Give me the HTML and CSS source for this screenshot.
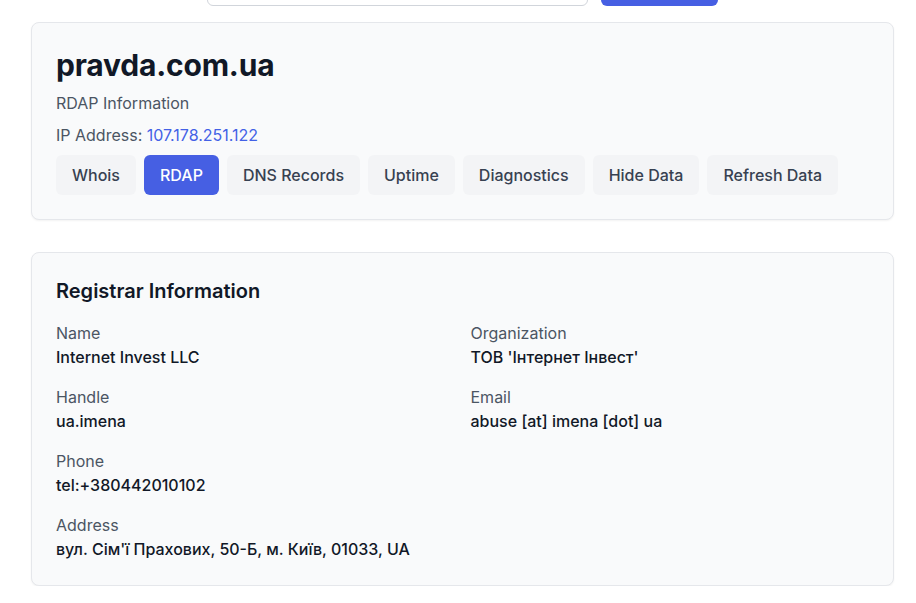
FILE: index.html
```html
<!DOCTYPE html>
<html lang="en">
<head>
<meta charset="utf-8">
<title>pravda.com.ua - RDAP</title>
<link rel="stylesheet" href="styles.css">
</head>
<body>
<div class="page">
  <form class="search">
    <input class="search-input" type="text" value="" aria-label="Domain">
    <button class="search-btn" type="button" aria-label="Lookup"></button>
  </form>

  <section class="card header-card">
    <h1 class="domain">pravda.com.ua</h1>
    <p class="subtitle">RDAP Information</p>
    <p class="ip">IP Address: <a class="ip-link" href="#">107.178.251.122</a></p>
    <div class="tabs">
      <button class="tab">Whois</button>
      <button class="tab active">RDAP</button>
      <button class="tab">DNS Records</button>
      <button class="tab">Uptime</button>
      <button class="tab">Diagnostics</button>
      <button class="tab">Hide Data</button>
      <button class="tab">Refresh Data</button>
    </div>
  </section>

  <section class="card info-card">
    <h2 class="section-title">Registrar Information</h2>
    <div class="grid">
      <div class="field">
        <div class="label">Name</div>
        <div class="value">Internet Invest LLC</div>
      </div>
      <div class="field">
        <div class="label">Organization</div>
        <div class="value">ТОВ 'Інтернет Інвест'</div>
      </div>
      <div class="field">
        <div class="label">Handle</div>
        <div class="value">ua.imena</div>
      </div>
      <div class="field">
        <div class="label">Email</div>
        <div class="value">abuse [at] imena [dot] ua</div>
      </div>
      <div class="field">
        <div class="label">Phone</div>
        <div class="value">tel:+380442010102</div>
      </div>
      <div class="field empty"></div>
      <div class="field">
        <div class="label">Address</div>
        <div class="value">вул. Сім'ї Прахових, 50-Б, м. Київ, 01033, UA</div>
      </div>
    </div>
  </section>
</div>
</body>
</html>
```

FILE: styles.css
```css
* { box-sizing: border-box; }

html, body {
  margin: 0;
  padding: 0;
  background: #ffffff;
  overflow: hidden;
}

body {
  font-family: Inter, "Noto Sans", "Liberation Sans", sans-serif;
  color: #111827;
  font-size: 16px;
  line-height: 24px;
}

.page {
  padding: 0 22px 0 31px;
}

.search {
  display: flex;
  justify-content: center;
  gap: 13px;
  margin: -34px 0 16px;
  height: 40px;
}

.search-input {
  width: 381px;
  height: 40px;
  border: 1px solid #d1d5db;
  border-radius: 6px;
  background: #fff;
  font: inherit;
  padding: 0 12px;
}

.search-btn {
  width: 117px;
  height: 40px;
  border: 0;
  border-radius: 6px;
  background: #465fe3;
  color: #fff;
  font: inherit;
  font-weight: 500;
}

.card {
  background: #f9fafb;
  border: 1px solid #e5e7eb;
  border-radius: 8px;
  box-shadow: 0 1px 2px rgba(0, 0, 0, 0.05);
  padding: 24px;
}

.header-card {
  margin-bottom: 32px;
}

.domain {
  margin: 0;
  font-size: 30px;
  line-height: 36px;
  font-weight: 700;
  color: #111827;
  letter-spacing: -0.2px;
}

.subtitle {
  margin: 8px 0 0;
  color: #4b5563;
}

.ip {
  margin: 8px 0 0;
  color: #4b5563;
}

.ip-link {
  color: #4361e6;
  text-decoration: none;
}

.tabs {
  display: flex;
  gap: 8px;
  margin-top: 8px;
}

.tab {
  height: 40px;
  padding: 0 16px;
  border: 0;
  border-radius: 6px;
  background: #f3f4f6;
  color: #374151;
  font: inherit;
  font-weight: 500;
}

.tab.active {
  background: #465fe3;
  color: #ffffff;
}

.section-title {
  margin: 0 0 16px;
  font-size: 20px;
  line-height: 28px;
  font-weight: 600;
  color: #111827;
}

.grid {
  display: grid;
  grid-template-columns: 1fr 1fr;
  gap: 16px;
}

.label {
  color: #4b5563;
}

.value {
  color: #111827;
  font-weight: 500;
}
```
